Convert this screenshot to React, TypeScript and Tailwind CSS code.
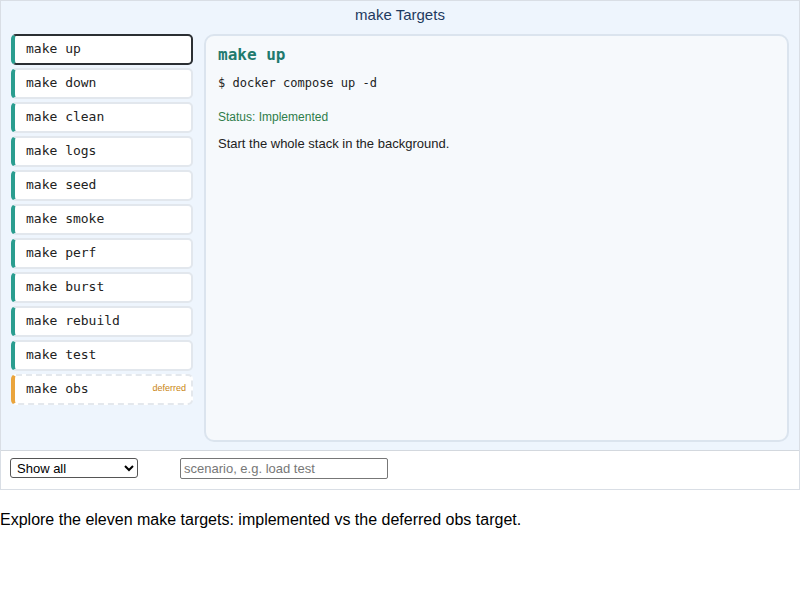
import { useState } from 'react'

interface Target {
  name: string
  cmd: string
  desc: string
  deferred?: boolean
}

const targets: Target[] = [
  { name: 'up', cmd: 'docker compose up -d', desc: 'Start the whole stack in the background.' },
  { name: 'down', cmd: 'docker compose down', desc: 'Stop and remove the stack.' },
  { name: 'clean', cmd: 'docker compose down -v', desc: 'Tear down and drop volumes.' },
  { name: 'logs', cmd: 'docker compose logs -f', desc: 'Follow logs from every service.' },
  { name: 'seed', cmd: 'python scripts/seed.py', desc: 'Load sample data.' },
  { name: 'smoke', cmd: 'pytest tests/smoke', desc: 'Run the smoke tests.' },
  { name: 'perf', cmd: 'k6 run perf.js', desc: 'Run the load test.' },
  { name: 'burst', cmd: 'k6 run burst.js', desc: 'Run the burst scenario.' },
  { name: 'rebuild', cmd: 'docker compose build --no-cache', desc: 'Rebuild all images.' },
  { name: 'test', cmd: 'pytest', desc: 'Run the full test suite.' },
  { name: 'obs', cmd: 'docker compose -f obs.yml up -d', desc: 'Observability stack.', deferred: true },
]

export default function App() {
  const [sel, setSel] = useState(0)
  const t = targets[sel]

  return (
    <div className="font-['Liberation_Sans',Arial,sans-serif]">
      <div className="border border-[#d9dee5]">
        <div className="bg-[#eef5fd]">
          <div className="pt-[5px] pb-[10px] text-center text-[15px] leading-[18px] text-[#1e3a5f]">make Targets</div>
          <div className="flex gap-[11px] px-[10px] pb-2">
            <div className="w-[182px] flex flex-col gap-[3px]">
              {targets.map((x, i) => (
                <button
                  key={x.name}
                  onClick={() => setSel(i)}
                  className={
                    'h-[31px] flex items-center justify-between rounded-[5px] bg-white pl-[11px] pr-[5px] pb-[2px] text-left ' +
                    (x.deferred
                      ? 'border-2 border-dashed border-[#e4e8ed] border-l-4 border-l-[#eaa43c]'
                      : i === sel
                        ? 'border-2 border-[#2b2f33] border-l-4 border-l-[#2a9d8f]'
                        : 'border-2 border-[#e2e7ed] border-l-4 border-l-[#2a9d8f]')
                  }
                  style={x.deferred ? { borderLeftStyle: 'solid' } : undefined}
                >
                  <span className="font-['DejaVu_Sans_Mono',monospace] text-[13px] text-[#222]">make {x.name}</span>
                  {x.deferred && <span className="text-[9px] text-[#c98512]">deferred</span>}
                </button>
              ))}
            </div>
            <div className="flex-1 h-[408px] rounded-[10px] border-2 border-[#dbe4ee] bg-[#f6f9fc] px-3 pt-[9px]">
              <h2 className="font-['DejaVu_Sans_Mono',monospace] text-[16px] leading-[20px] font-bold text-[#1f7a6e]">make {t.name}</h2>
              <p className="mt-[10px] font-['DejaVu_Sans_Mono',monospace] text-[12px] leading-[16px] text-[#222]">$ {t.cmd}</p>
              <p className="mt-[18px] text-[12px] leading-[16px] text-[#2e7d4a]">
                Status: {t.deferred ? 'Deferred' : 'Implemented'}
              </p>
              <p className="mt-[10px] text-[13px] leading-[18px] text-[#222]">{t.desc}</p>
            </div>
          </div>
        </div>
        <div className="border-t border-[#d3d8de] bg-white h-[39px] flex items-start pt-[7px] px-[9px] gap-[42px]">
          <select className="w-[128px] h-[20px] border border-[#555] rounded-[3px] text-[13px] text-black bg-white px-[2px]">
            <option>Show all</option>
            <option>Implemented</option>
            <option>Deferred</option>
          </select>
          <input
            className="w-[208px] h-[21px] border border-[#777] rounded-[2px] text-[13px] px-[3px] placeholder:text-[#777]"
            placeholder="scenario, e.g. load test"
          />
        </div>
      </div>
      <p className="mt-[18px] text-[16px] text-black">Explore the eleven make targets: implemented vs the deferred obs target.</p>
    </div>
  )
}
